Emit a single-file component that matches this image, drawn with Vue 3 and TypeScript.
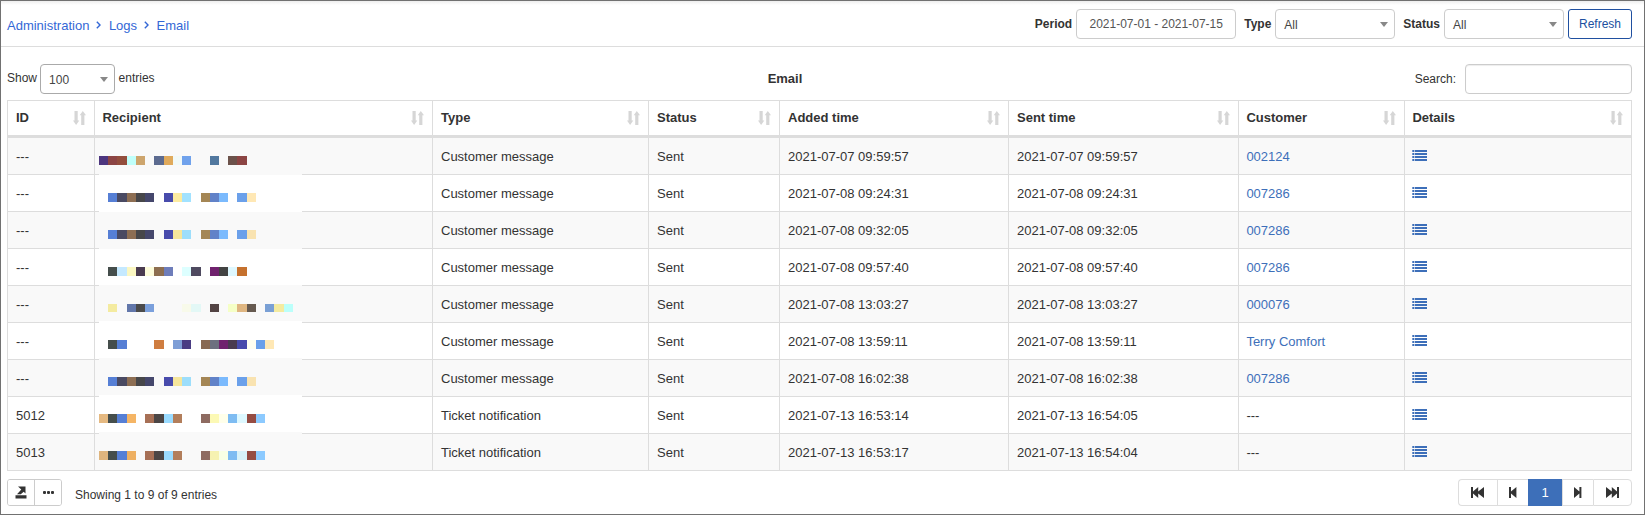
<script setup lang="ts">
interface Row {
  id: string
  type: string
  added: string
  sent: string
  customer: string
  link: boolean
  maskTop: number
  maskHeight: number
  blockTop: number
  blockHeight: number
  blocks: Record<number, string>
}

const columns = ['ID', 'Recipient', 'Type', 'Status', 'Added time', 'Sent time', 'Customer', 'Details']
const edges = [0, 9, 18, 28, 37, 46, 55, 65, 74, 83, 92, 102, 111, 120, 129, 138, 148, 157, 166, 175, 185, 194]

const repeated = (yellow: string, cyan: string, sand: string): Record<number, string> => ({
  1: '#567fd5', 2: '#4a4a62', 3: '#8d6e53', 4: '#47474a', 5: '#45476c', 7: '#484bac', 8: yellow, 9: cyan,
  11: '#a48655', 12: '#6182c8', 13: '#7bbafd', 15: '#6ba0ea', 16: sand,
})
const ticket = (a: string, b: string, c: string, d: string, e: string): Record<number, string> => ({
  0: a, 1: '#454e4c', 2: '#567fd5', 3: b, 5: '#a77056', 6: '#4c4645', 7: '#9adbff', 8: '#b27e5b',
  11: '#8e6b61', 12: c, 13: d, 14: '#7ebcf2', 15: e, 16: '#954c43', 17: '#8ccaff',
})

function message(time: string, customer: string, mask: [number, number, number, number], blocks: Record<number, string>): Row {
  return {
    id: '---', type: 'Customer message', added: time, sent: time, customer, link: true,
    maskTop: mask[0], maskHeight: mask[1], blockTop: mask[2], blockHeight: mask[3], blocks,
  }
}

const rows: Row[] = [
  message('2021-07-07 09:59:57', '002124', [0, 37, 18, 9], {
    0: '#4d367f', 1: '#8c4544', 2: '#934e3d', 3: '#c0fffa', 4: '#cda56d', 6: '#5c6b90', 7: '#e0aa5c',
    8: '#f1f9f8', 9: '#70a2ec', 12: '#52789f', 14: '#6c524b', 15: '#8c4544',
  }),
  message('2021-07-08 09:24:31', '007286', [0, 37, 18, 9], repeated('#fdeba0', '#a2e2ff', '#ffe8b5')),
  message('2021-07-08 09:32:05', '007286', [0, 37, 18, 9], repeated('#f6e69c', '#9ddefb', '#f9e3b1')),
  message('2021-07-08 09:57:40', '007286', [0, 36, 18, 9], {
    1: '#454e4c', 2: '#c5e9ff', 3: '#fbf7c2', 4: '#4a3b50', 5: '#fdfcdb', 6: '#8d6e50', 7: '#6e7dba',
    9: '#ddffff', 10: '#4f4a60', 12: '#70226e', 13: '#434343', 14: '#def8ff', 15: '#c5712e',
  }),
  message('2021-07-08 13:03:27', '000076', [-1, 36, 18, 8], {
    1: '#f4eba0', 3: '#6277aa', 4: '#4b4b4b', 5: '#7ba0dc', 9: '#f8faea', 10: '#e3f8f6', 12: '#534444',
    14: '#f5ffc6', 15: '#dfb681', 16: '#665a50', 18: '#7aa0d5', 19: '#f4eba0', 20: '#bbfffa',
  }),
  message('2021-07-08 13:59:11', 'Terry Comfort', [-2, 37, 17, 9], {
    1: '#454e4c', 2: '#567fd5', 6: '#cf7d40', 8: '#7e9ed6', 9: '#493c83', 11: '#886953', 12: '#6d7080',
    13: '#70226e', 14: '#4a3b50', 15: '#484bac', 16: '#fffff1', 17: '#6ba0ea', 18: '#ffe8b5',
  }),
  message('2021-07-08 16:02:38', '007286', [-2, 37, 17, 9], repeated('#f6e69c', '#9ddefb', '#f9e3b1')),
  {
    id: '5012', type: 'Ticket notification', added: '2021-07-13 16:53:14', sent: '2021-07-13 16:54:05',
    customer: '---', link: false, maskTop: -2, maskHeight: 37, blockTop: 17, blockHeight: 9,
    blocks: ticket('#e5b981', '#f5b565', '#fcf9b5', '#ffffea', '#ddf8ff'),
  },
  {
    id: '5013', type: 'Ticket notification', added: '2021-07-13 16:53:17', sent: '2021-07-13 16:54:04',
    customer: '---', link: false, maskTop: -2, maskHeight: 38, blockTop: 17, blockHeight: 9,
    blocks: ticket('#dfb57e', '#eeb062', '#f6f2b1', '#f8ffe5', '#d8f2f9'),
  },
]

const pagerIcons: Record<string, string> = {
  first: 'M0 0H2V4.6L7.2 0V4.6L13 0V11L7.2 6.4V11L2 6.4V11H0Z',
  prev: 'M0 0H2V4.6L7.4 0V11L2 6.4V11H0Z',
  next: 'M7.4 0H5.4V4.6L0 0V11L5.4 6.4V11H7.4Z',
  last: 'M13 0H11V4.6L5.8 0V4.6L0 0V11L5.8 6.4V11L11 6.4V11H13Z',
}
</script>

<template>
  <main class="page">
    <header class="topbar">
      <nav class="crumbs">
        <a>Administration</a>
        <svg width="5" height="8" viewBox="0 0 5 8"><path d="M.8.8 4 4 .8 7.2" /></svg>
        <a>Logs</a>
        <svg width="5" height="8" viewBox="0 0 5 8"><path d="M.8.8 4 4 .8 7.2" /></svg>
        <a>Email</a>
      </nav>
      <div class="filters">
        <b>Period</b>
        <div class="field period">2021-07-01 - 2021-07-15</div>
        <b class="type-label">Type</b>
        <div class="field select"><span>All</span><i class="caret"></i></div>
        <b class="status-label">Status</b>
        <div class="field select"><span>All</span><i class="caret"></i></div>
        <button class="refresh">Refresh</button>
      </div>
    </header>

    <section class="tools">
      <div class="length">
        <span>Show</span>
        <div class="field select size"><span>100</span><i class="caret"></i></div>
        <span>entries</span>
      </div>
      <b class="title">Email</b>
      <label class="search"><span>Search:</span><input class="field" type="text" /></label>
    </section>

    <table>
      <colgroup><col v-for="c in columns" :key="c" :class="'c-' + c.split(' ')[0].toLowerCase()" /></colgroup>
      <thead>
        <tr>
          <th v-for="c in columns" :key="c">
            <div class="head">
              <span>{{ c }}</span>
              <svg width="13" height="14" viewBox="0 0 13 14">
                <path d="M1.5 0H4.7V9.6H6.3L3.1 14 0 9.6H1.5ZM8.2 14H11.4V4.2H13L9.8 0 6.7 4.2H8.2Z" />
              </svg>
            </div>
          </th>
        </tr>
      </thead>
      <tbody>
        <tr v-for="(row, i) in rows" :key="i">
          <td>{{ row.id }}</td>
          <td class="recipient">
            <svg class="mosaic" width="203" height="37" shape-rendering="crispEdges">
              <rect class="mask" x="0" :y="row.maskTop" width="203" :height="row.maskHeight" />
              <rect
                v-for="(color, n) in row.blocks" :key="n" :x="edges[Number(n)]" :y="row.blockTop"
                :width="edges[Number(n) + 1] - edges[Number(n)]" :height="row.blockHeight" :fill="color"
              />
            </svg>
          </td>
          <td>{{ row.type }}</td>
          <td>Sent</td>
          <td>{{ row.added }}</td>
          <td>{{ row.sent }}</td>
          <td><a v-if="row.link">{{ row.customer }}</a><template v-else>{{ row.customer }}</template></td>
          <td>
            <svg class="list" width="15" height="11" viewBox="0 0 15 11">
              <path d="M.3 0h2v2h-2zM2.9 0H15v2H2.9zM.3 3h2v2h-2zM2.9 3H15v2H2.9zM.3 6h2v2h-2zM2.9 6H15v2H2.9zM.3 9h2v2h-2zM2.9 9H15v2H2.9z" />
            </svg>
          </td>
        </tr>
      </tbody>
    </table>

    <footer class="bottom">
      <div class="group">
        <button>
          <svg width="12" height="13" viewBox="0 0 12 13">
            <path d="M.5 9.3H11.5V12.5H.5ZM3 .5H10.5V7.5L8.7 5.8 5.8 8.3H2L6.3 3.4Z" />
          </svg>
        </button>
        <button>
          <svg width="11" height="3" viewBox="0 0 11 3">
            <rect width="3" height="3" rx="1" /><rect x="4" width="3" height="3" rx="1" /><rect x="8" width="3" height="3" rx="1" />
          </svg>
        </button>
      </div>
      <span class="info">Showing 1 to 9 of 9 entries</span>
      <div class="pager">
        <button class="outer"><svg width="13" height="11"><path :d="pagerIcons.first" /></svg></button>
        <button class="inner"><svg width="8" height="11"><path :d="pagerIcons.prev" /></svg></button>
        <button class="current">1</button>
        <button class="inner"><svg width="8" height="11"><path :d="pagerIcons.next" /></svg></button>
        <button class="outer"><svg width="13" height="11"><path :d="pagerIcons.last" /></svg></button>
      </div>
    </footer>
  </main>
</template>

<style>
body { margin: 0; background: #fff; }
</style>

<style scoped>
* { box-sizing: border-box; }
.page {
  width: 1645px; height: 515px; overflow: hidden; border: 1px solid #717171;
  font: 12px/16px "Liberation Sans", Arial, sans-serif; color: #333; background: #fff;
}
button { font: inherit; color: inherit; background: #fff; padding: 0; margin: 0; }
.topbar {
  height: 46px; border-bottom: 1px solid #ddd; display: flex; justify-content: space-between;
  padding: 8px 12px 0 6px; background: linear-gradient(#eee, #fff 4px);
}
.crumbs { display: flex; align-items: center; height: 34px; font-size: 13px; color: #3367d6; }
.crumbs svg { fill: none; stroke: #3367d6; stroke-width: 1.4; margin: 0 8px 3px 7px; }
.crumbs svg + a { margin-left: -.5px; }
.filters { display: flex; align-items: center; height: 30px; }
.field { height: 30px; border: 1px solid #ccc; border-radius: 4px; background: #fff; }
.period { width: 160px; line-height: 28px; text-align: center; color: #555; margin-left: 4px; }
.type-label { margin-left: 8px; }
.status-label { margin-left: 8px; }
.select {
  width: 120px; margin-left: 4px; display: flex; align-items: center; justify-content: space-between;
  padding: 2px 6px 0 8px; color: #444;
}
.select .caret { margin-bottom: 2px; }
.caret { border: 4px solid transparent; border-top: 5px solid #888; border-bottom: 0; }
.refresh { width: 64px; height: 30px; margin-left: 4px; border: 1px solid #2050a0; border-radius: 3px; color: #2050a0; }
.tools { display: grid; grid-template-columns: 1fr 1fr 1fr; padding: 17px 12px 0 6px; height: 53px; }
.length { display: flex; height: 30px; line-height: 28px; }
.size { width: 75px; margin: 0 3.5px 0 3px; border-color: #aaa; }
.title { text-align: center; font-size: 13px; line-height: 29px; padding-right: 69px; }
.search { display: flex; justify-content: flex-end; line-height: 30px; }
.search .field { width: 167px; margin: 0 0 0 9px; box-shadow: inset 0 1px 1px rgba(0, 0, 0, .075); }
table {
  table-layout: fixed; width: 1625px; margin-left: 6px; border-collapse: separate; border-spacing: 0;
  border-left: 1px solid #ddd; border-top: 1px solid #ddd; font-size: 13px;
}
.c-id { width: 87px; }
.c-recipient { width: 338px; }
.c-type { width: 216px; }
.c-status { width: 131px; }
.c-added { width: 229px; }
.c-sent { width: 230px; }
.c-customer { width: 166px; }
.c-details { width: 227px; }
th { height: 37px; padding: 0 8px; border-right: 1px solid #ddd; border-bottom: 3px solid #ddd; text-align: left; }
th:nth-child(2), th:nth-child(7), th:nth-child(8), td:nth-child(7), td:nth-child(8) { padding-left: 7.4px; }
.head { display: flex; align-items: center; justify-content: space-between; }
.head svg { fill: #d6d6d6; }
td { height: 37px; padding: 1px 8px 0; border-right: 1px solid #ddd; border-bottom: 1px solid #ddd; line-height: 18px; }
tr { --bg: #fff; }
tbody tr:nth-child(odd) { --bg: #f9f9f9; }
td { background: var(--bg); }
a { text-decoration: none; }
td a { color: #3d6fb9; }
.recipient { position: relative; }
.mosaic { position: absolute; left: 4px; top: 0; overflow: visible; }
.mask { fill: var(--bg); }
.list { display: block; fill: #3d6fb9; margin-bottom: 3px; }
.bottom { display: flex; align-items: flex-start; padding: 8px 12px 0 6px; }
.group { display: flex; width: 55px; height: 27px; border: 1px solid #ccc; border-radius: 3px; overflow: hidden; }
.group button { flex: 1; border: 0; display: flex; align-items: center; justify-content: center; }
.group button + button { border-left: 1px solid #ccc; }
.group svg, .pager svg { fill: #333; }
.info { margin: 8px 0 0 13px; }
.pager { display: flex; margin-left: auto; height: 27px; width: 174px; }
.pager button { height: 27px; border: 1px solid #ddd; border-right: 0; display: flex; align-items: center; justify-content: center; padding-right: 1px; }
.pager .outer { width: 39px; }
.pager .inner { width: 31px; }
.pager .current { width: 34px; background: #3d6fb9; border-color: #3d6fb9; color: #fff; font-size: 13px; }
.pager button:first-child { border-radius: 4px 0 0 4px; }
.pager button:last-child { border-right: 1px solid #ddd; border-radius: 0 4px 4px 0; }
</style>
